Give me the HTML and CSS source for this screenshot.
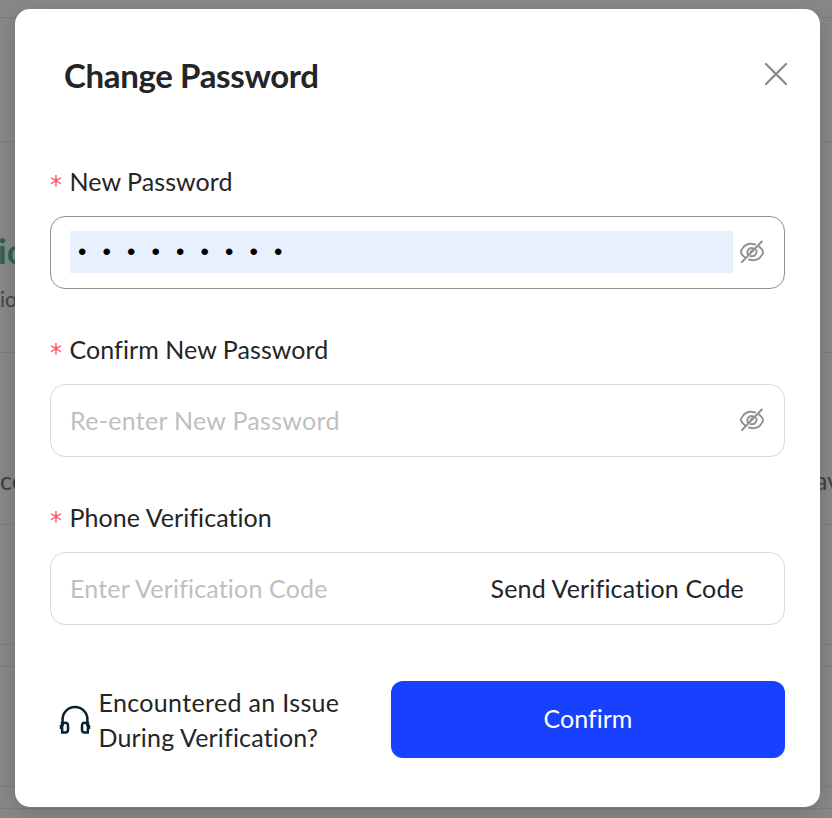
FILE: index.html
```html
<!DOCTYPE html>
<html lang="en">
<head>
<meta charset="utf-8">
<title>Change Password</title>
<link rel="stylesheet" href="styles.css">
</head>
<body>
<div class="page">
  <div class="row row-top"></div>
  <div class="row row-head"></div>
  <div class="row row-profile"><div class="crop heading">io</div><div class="crop note">io</div></div>
  <div class="row row-account"><span class="crop start">co</span><span class="crop end">av</span></div>
  <div class="row row-detail"></div>
  <div class="row row-gap"></div>
  <div class="row row-detail"></div>
  <div class="row row-gap"></div>
</div>
<main class="modal">
  <header class="modal-header">
    <h1>Change Password</h1>
    <svg class="close" viewBox="0 0 24 24"><path d="M2 2L22 22M22 2L2 22"/></svg>
  </header>
  <section class="field">
    <label><span class="star">*</span><span class="w-label">New Password</span></label>
    <div class="input active">
      <div class="filled">•••••••••</div>
      <svg class="eye" viewBox="0 0 26 24"><path d="M16 4.5Q8 2 3.8 8Q1.6 10.7 2 12Q2.5 15 6 17.6M10 19.5Q18 22 22.2 16Q24.4 13.3 24 12Q23.4 8.9 20 6.4M15.5 8.8Q11 6.7 8.9 10.1Q7.7 12.4 9 14.7M11.5 16.1Q15 17 16.9 14Q18 12 17.2 10.2M11.6 13.5A2.2 2.2 0 0 1 14.4 10.7M3 22L22.8 1.5"/></svg>
    </div>
  </section>
  <section class="field">
    <label><span class="star">*</span><span class="w-label">Confirm New Password</span></label>
    <div class="input">
      <span class="hint w-reenter">Re-enter New Password</span>
      <svg class="eye" viewBox="0 0 26 24"><path d="M16 4.5Q8 2 3.8 8Q1.6 10.7 2 12Q2.5 15 6 17.6M10 19.5Q18 22 22.2 16Q24.4 13.3 24 12Q23.4 8.9 20 6.4M15.5 8.8Q11 6.7 8.9 10.1Q7.7 12.4 9 14.7M11.5 16.1Q15 17 16.9 14Q18 12 17.2 10.2M11.6 13.5A2.2 2.2 0 0 1 14.4 10.7M3 22L22.8 1.5"/></svg>
    </div>
  </section>
  <section class="field">
    <label><span class="star">*</span><span class="w-label">Phone Verification</span></label>
    <div class="input code">
      <span class="hint w-code">Enter Verification Code</span>
      <span class="send w-code">Send Verification Code</span>
    </div>
  </section>
  <footer class="modal-footer">
    <div class="help">
      <svg class="headset" viewBox="0 0 32 30"><path d="M3.6 21V14.5A12.4 12.4 0 0 1 28.4 14.5V21"/><path d="M3 18H5.5Q9 17 9 21V24.5Q9 27.5 6.5 27.5H3.2ZM29 18H26.5Q23 17 23 21V24.5Q23 27.5 25.5 27.5H28.8Z"/><path d="M2 20V24M30 20V24"/></svg>
      <div class="help-text"><div class="w-issue">Encountered an Issue</div><div class="w-code">During Verification?</div></div>
    </div>
    <button class="confirm">Confirm</button>
  </footer>
</main>
</body>
</html>
```
FILE: styles.css
```css
* { box-sizing: border-box; }
body {
  margin: 0;
  width: 832px;
  height: 818px;
  overflow: hidden;
  position: relative;
  background: #888;
  font-family: Lato, "Noto Sans", sans-serif;
  font-size: 25px;
  font-variant-ligatures: none;
  color: #242527;
}
.page { width: 832px; }
.row { border-bottom: 1px solid #7d7d7d; }
.row-top { height: 18px; }
.row-head { height: 124px; }
.row-profile { height: 211px; padding-top: 87px; }
.row-account { height: 172px; display: flex; justify-content: space-between; align-items: flex-start; padding-top: 112px; }
.row-detail { height: 120px; }
.row-gap { height: 22px; }
.crop { white-space: nowrap; }
.heading { font-size: 34px; line-height: 44px; font-weight: 700; color: #2a6354; margin-left: -2px; }
.note { font-size: 21px; line-height: 28px; margin-top: 12px; color: #424448; }
.start { color: #3e4146; }
.end { color: #3e4146; margin-right: -8px; }

/* The dialog floats over the dimmed page. */
.modal {
  position: absolute;
  left: 15px;
  top: 9px;
  width: 805px;
  height: 798px;
  padding: 0 35px;
  background: #fff;
  border-radius: 15px;
  box-shadow: 0 6px 24px rgba(0, 0, 0, .16);
}
.modal-header {
  height: 151px;
  padding: 43px 0 0 14px;
  display: flex;
  justify-content: space-between;
}
h1 { margin: 0; font-size: 33px; line-height: 46px; font-weight: 700; letter-spacing: -.35px; }
.close { width: 24px; height: 24px; margin: 10px -3px 0 0; fill: none; stroke: #8b8b8b; stroke-width: 2.3; stroke-linecap: round; }
.field { height: 168px; }
label { display: flex; align-items: center; height: 44px; padding-bottom: 2px; white-space: nowrap; }
.star { width: 19.5px; font: 24px/30px "DejaVu Sans", sans-serif; color: #ff5558; padding-top: 7px; }
.w-label { letter-spacing: .07px; }
.w-reenter { letter-spacing: .29px; }
.w-code { letter-spacing: .17px; }
.w-issue { letter-spacing: .34px; }
.input {
  height: 73px;
  margin-top: 12px;
  padding: 0 19px 2px;
  border: 1px solid #d9d9d9;
  border-radius: 15px;
  display: flex;
  align-items: center;
  justify-content: space-between;
}
.active { border-color: #8f8f8f; }
.filled {
  width: 663px;
  height: 42px;
  padding-left: 8px;
  background: #e8effd;
  color: #000;
  font: 24px/41px "Liberation Sans", sans-serif;
  letter-spacing: 16.1px;
}
.eye { width: 26px; height: 24px; fill: none; stroke: #909090; stroke-width: 1.9; stroke-linecap: round; }
.hint { color: #bfbfbf; white-space: nowrap; }
.code { padding-right: 40px; }
.send { white-space: nowrap; }
.modal-footer { display: flex; justify-content: space-between; align-items: center; height: 77px; margin-top: 17px; }
.help { display: flex; align-items: center; padding-left: 8.5px; gap: 8px; white-space: nowrap; }
.headset { width: 32px; height: 30px; fill: none; stroke: #08212f; stroke-width: 2.5; }
.help-text { line-height: 35px; padding-top: 1px; }
.confirm {
  width: 394px;
  height: 77px;
  padding: 0 0 3px;
  border: 0;
  border-radius: 12px;
  background: #1840ff;
  box-shadow: 0 2px 2px rgba(0, 0, 0, .03);
  color: #fff;
  font: 25px Lato, sans-serif;
  font-variant-ligatures: none;
}
```
